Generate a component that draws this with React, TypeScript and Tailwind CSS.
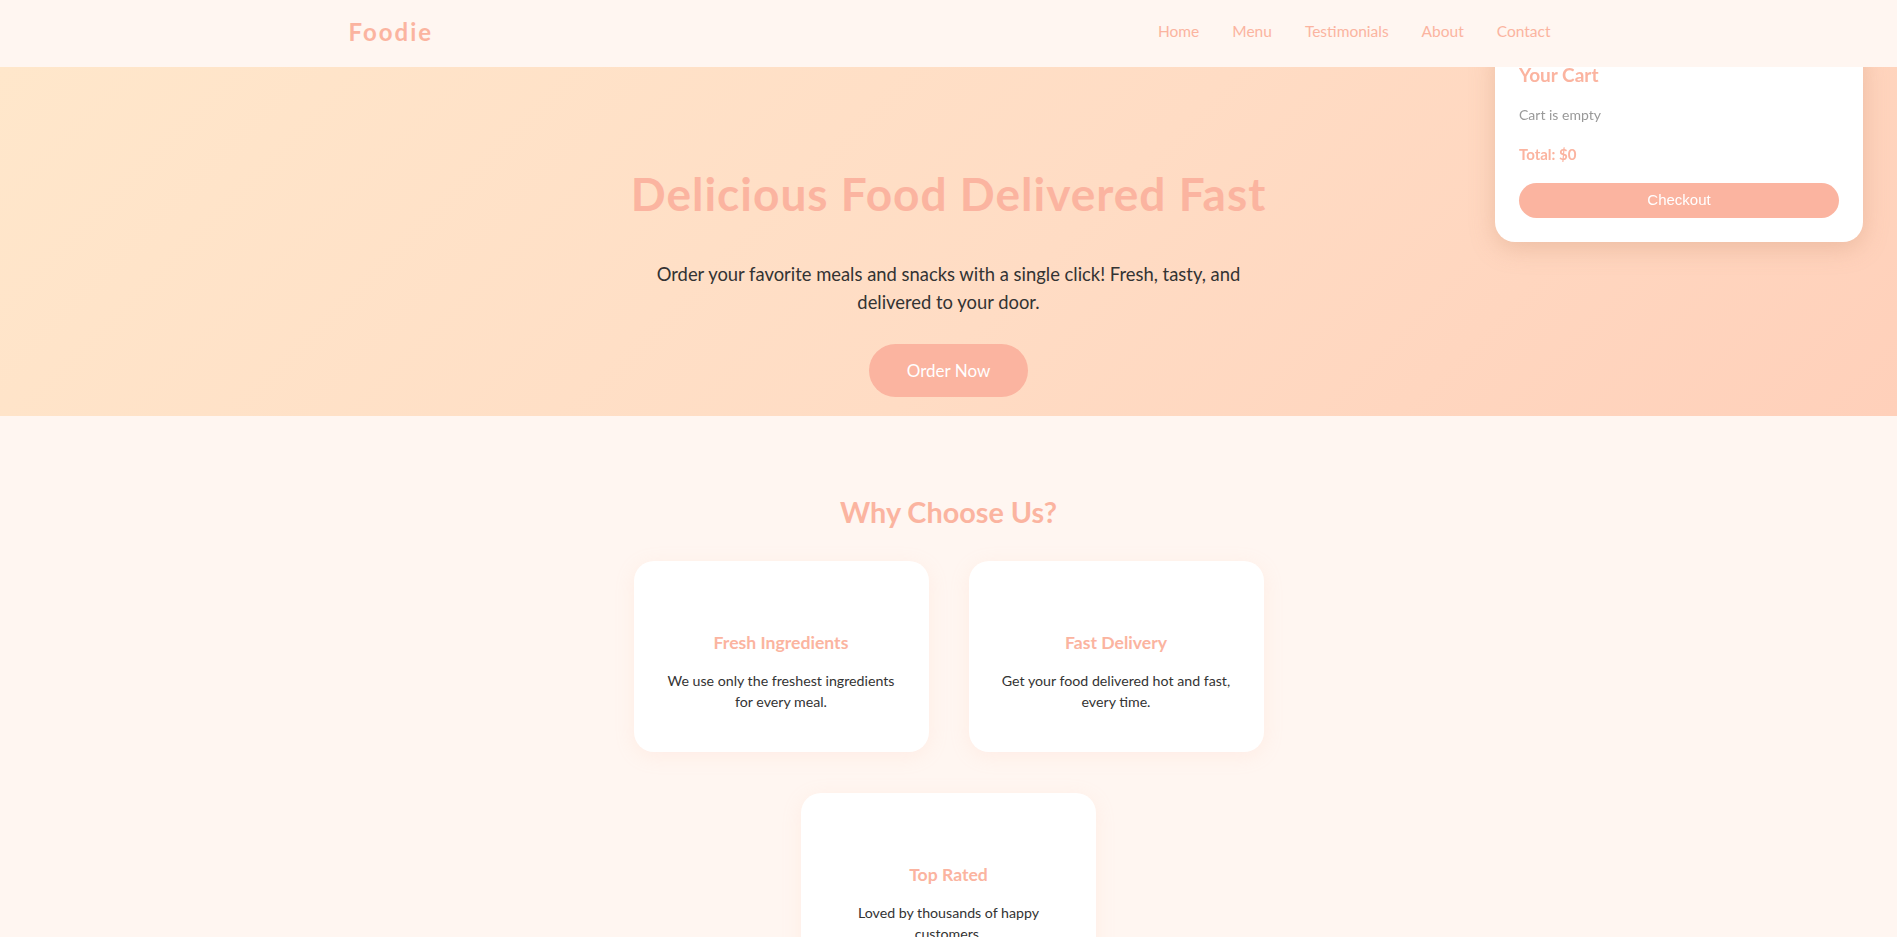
const features = [
  { title: 'Fresh Ingredients', text: 'We use only the freshest ingredients for every meal.' },
  { title: 'Fast Delivery', text: 'Get your food delivered hot and fast, every time.' },
  { title: 'Top Rated', text: 'Loved by thousands of happy customers.' },
];

const links = ['Home', 'Menu', 'Testimonials', 'About', 'Contact'];

function Navbar() {
  return (
    <header className="fixed inset-x-0 top-0 z-20 h-[67px] bg-[#fff6f1]">
      <div className="mx-auto flex h-full max-w-[1200px] items-center justify-between pb-[3px]">
        <div className="text-[24px] font-bold tracking-[2px] text-[#fbb4a0]">Foodie</div>
        <nav className="mr-[-2px] flex gap-[33px] text-[15.5px] text-[#fbb4a0]">
          {links.map((l) => (
            <a key={l} href="#" className="hover:text-[#f89a80]">
              {l}
            </a>
          ))}
        </nav>
      </div>
    </header>
  );
}

function Cart() {
  return (
    <aside className="fixed right-[34px] top-[40px] z-10 w-[368px] rounded-[20px] bg-white px-6 pb-6 pt-[23px] shadow-[0_6px_24px_rgba(200,140,110,0.35)]">
      <h3 className="text-[19px] font-bold leading-6 text-[#fbb4a0]">Your Cart</h3>
      <p className="mt-[18px] text-[14px] leading-5 text-[#999]">Cart is empty</p>
      <p className="mt-[18px] text-[15px] font-bold leading-[22px] text-[#fbb4a0]">Total: $0</p>
      <button className="mt-[18px] h-[35px] w-full rounded-full bg-[#fbb4a0] text-[15px] text-white [font-family:'Liberation_Sans',Arial,sans-serif]">
        Checkout
      </button>
    </aside>
  );
}

function Hero() {
  return (
    <section className="flex h-[349px] flex-col items-center bg-[linear-gradient(135deg,#ffe7cb_0%,#ffdcc4_55%,#ffd0ba_100%)] pt-[100px] text-center">
      <h1 className="text-[46px] font-bold leading-[53px] tracking-[1px] text-[#fbb4a0]">
        Delicious Food Delivered Fast
      </h1>
      <p className="mt-[40px] max-w-[600px] text-[18.4px] leading-[28px] text-[#333]">
        Order your favorite meals and snacks with a single click! Fresh, tasty, and delivered to your door.
      </p>
      <button className="mt-[28px] h-[53px] rounded-full bg-[#fbb4a0] px-[38px] text-[17px] text-white">
        Order Now
      </button>
    </section>
  );
}

function Features() {
  return (
    <section className="flex flex-col items-center pb-16 pt-[77px]">
      <h2 className="text-[28.8px] font-bold leading-[38px] text-[#fbb4a0]">Why Choose Us?</h2>
      <div className="mt-[30px] flex w-[632px] flex-wrap justify-center gap-x-[40px] gap-y-[41px]">
        {features.map((f) => (
          <div
            key={f.title}
            className="flex w-[295px] flex-col items-center rounded-[20px] bg-white px-7 pb-[40px] pt-[70px] text-center shadow-[0_4px_20px_rgba(255,190,160,0.15)]"
          >
            <h3 className="text-[17.6px] font-bold leading-6 text-[#fbb4a0]">{f.title}</h3>
            <p className="mt-[16px] text-[14.2px] leading-[20.6px] text-[#333]">{f.text}</p>
          </div>
        ))}
      </div>
    </section>
  );
}

export default function App() {
  return (
    <div className="min-h-screen bg-[#fff6f1] pt-[67px] [font-family:Lato,sans-serif]">
      <Navbar />
      <Cart />
      <Hero />
      <Features />
    </div>
  );
}
